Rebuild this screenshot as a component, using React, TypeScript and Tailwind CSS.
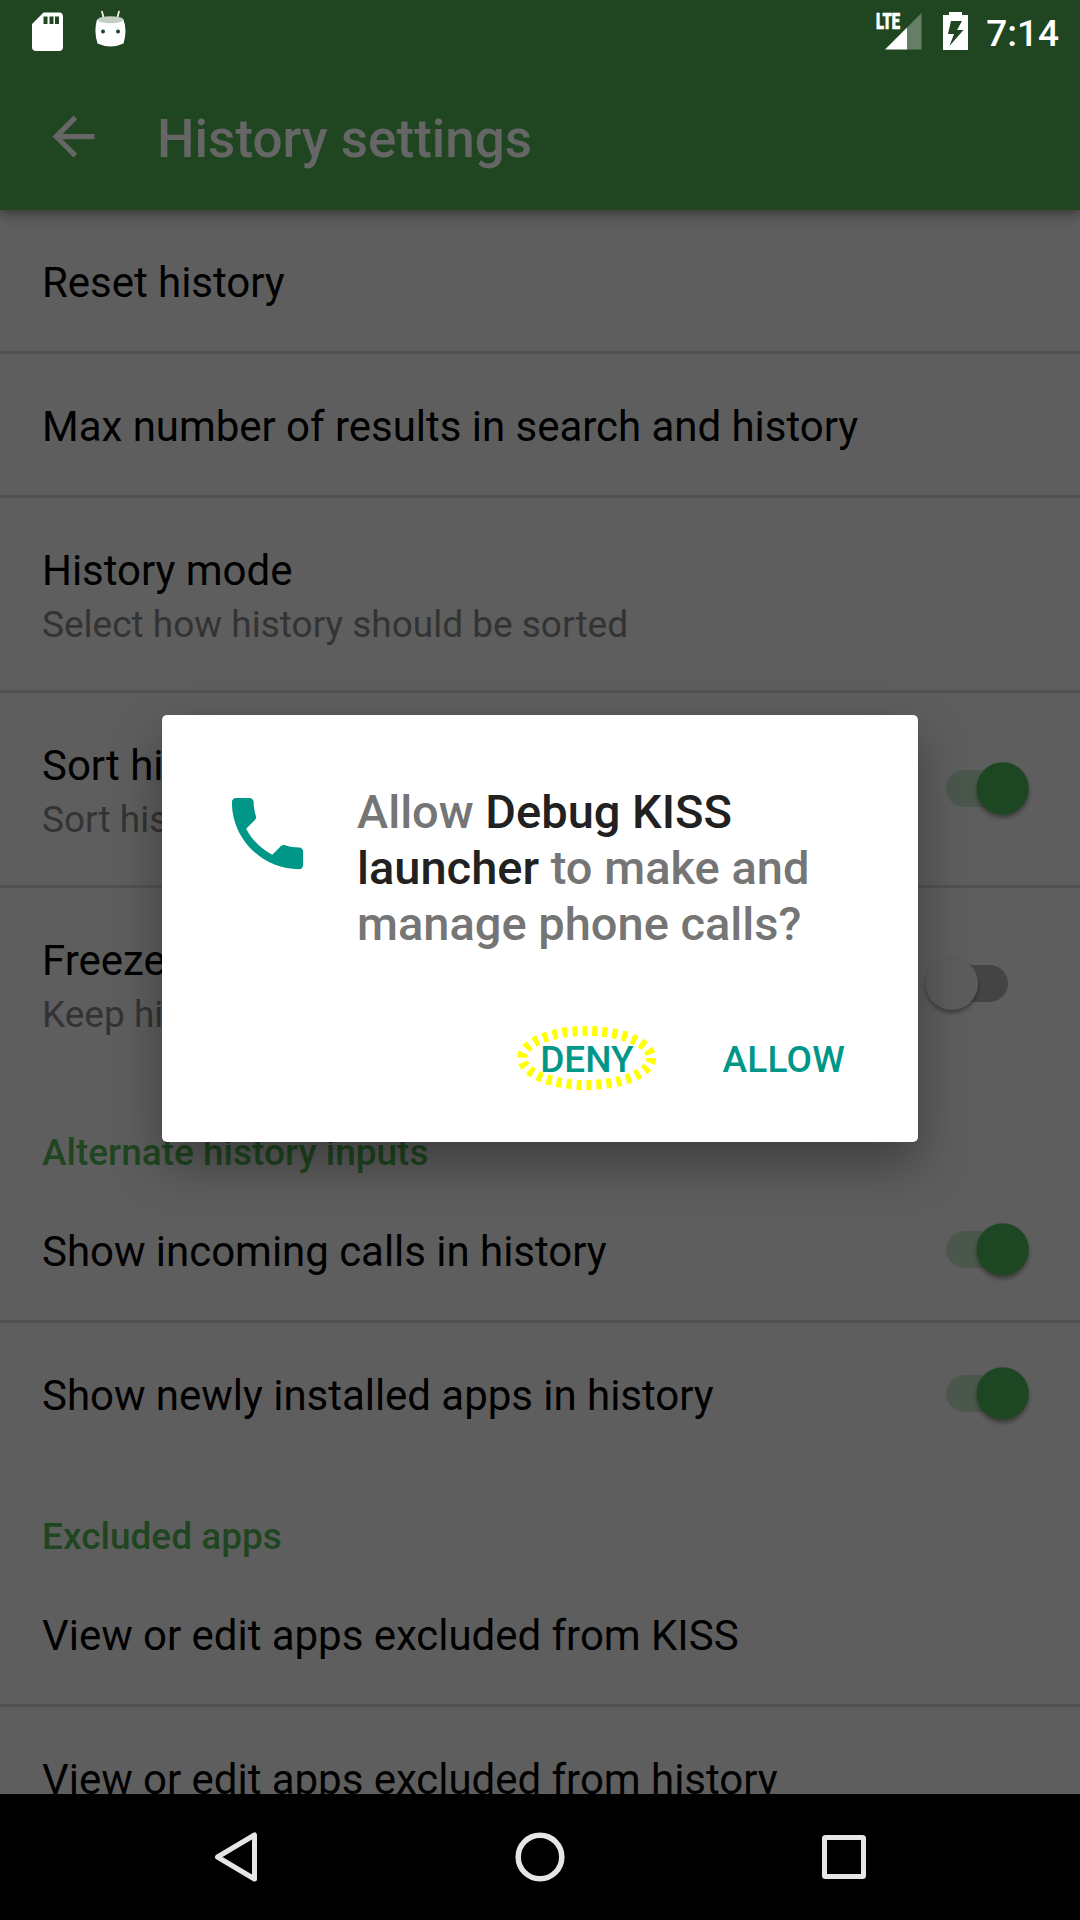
import React from "react";

function Switch({ on }: { on: boolean }) {
  return (
    <svg width="120" height="80" viewBox="0 0 120 80" className="mr-[36px] shrink-0 overflow-visible">
      <defs>
        <filter id="thumb" x="-50%" y="-50%" width="200%" height="200%">
          <feDropShadow dx="0" dy="3" stdDeviation="2.2" floodColor="#000" floodOpacity="0.38" />
        </filter>
      </defs>
      <rect x="22" y="21" width="62" height="37" rx="18.5" fill={on ? "#4b574c" : "#444444"} />
      <circle cx={on ? 78.7 : 27.8} cy="39.5" r="26.2" fill={on ? "#1f4620" : "#5c5c5c"} filter="url(#thumb)" />
    </svg>
  );
}

function Row({ title, summary, on, last }: { title: string; summary?: string; on?: boolean; last?: boolean }) {
  return (
    <div className={last ? "" : "border-b-[3px] border-[#525252]"}>
      <div className={`flex items-center justify-between pl-[42px] ${summary ? "h-[192px]" : "h-[141px]"}`}>
        <div className={`whitespace-nowrap ${summary ? "pt-[9px]" : "pt-[4px]"}`}>
          <div className="text-[42px] leading-[49px] tracking-[-0.03px] text-black">{title}</div>
          {summary && <div className="mt-[4px] text-[37px] leading-[52px] text-[#333333]">{summary}</div>}
        </div>
        {on !== undefined && <Switch on={on} />}
      </div>
    </div>
  );
}

function Category({ title }: { title: string }) {
  return (
    <div className="h-[99px] pt-[51px] pl-[42px] text-[37px] leading-[43px] font-medium text-[#1f4620]">{title}</div>
  );
}

function StatusBar() {
  return (
    <div className="flex h-[63px] justify-between">
      <svg width="140" height="63" viewBox="0 0 140 63">
        <path fill="#fff" fillRule="evenodd" d="M43.500 12.500H59a4 4 0 0 1 4 4V47a4 4 0 0 1-4 4H36a4 4 0 0 1-4-4V24zM43.500 16.500V24h4V16.500zM49.500 16.500V24h4V16.500zM55 16.500V24h4V16.500z" />
        <path stroke="#fff" strokeWidth="1.6" strokeLinecap="round" d="M102 11.500l1.800 7M119 11.500l-1.800 7" />
        <path fill="#fff" d="M97 19.500Q110.500 25 123.500 19.500Q127.500 31 123.500 43.500Q110.500 49.500 97.500 43.500Q93.500 31 97 19.500z" />
        <ellipse cx="110.500" cy="19.700" rx="13" ry="3.500" fill="#c3cfc3" />
        <circle cx="103" cy="31.500" r="2" fill="#1f4620" />
        <circle cx="118" cy="31.500" r="2" fill="#1f4620" />
      </svg>
      <div className="flex">
        <svg width="105" height="63" viewBox="870 0 105 63">
          <text x="876" y="29" fill="#fff" stroke="#fff" strokeWidth="0.7" fontFamily="Roboto" fontWeight="900" fontSize="22" textLength="24" lengthAdjust="spacingAndGlyphs">LTE</text>
          <path fill="#fff" d="M885 49.500l22-22v22z" />
          <path fill="#647f66" d="M907 27.500l14.500-14.500v36.500H907z" />
          <path fill="#fff" fillRule="evenodd" d="M949 12h13v3h6v35h-25V15h6zM951 21l-3 13h6l-4.500 12L963.500 30h-6.500l5-9z" />
        </svg>
        <span className="mt-[12px] mr-[21px] ml-[11px] text-[37px] leading-[43px] font-medium text-white">7:14</span>
      </div>
    </div>
  );
}

function AppBar() {
  return (
    <div className="flex h-[147px] items-center pl-[42px]">
      <svg width="63" height="63" viewBox="0 0 24 24" fill="#666666">
        <path d="M20 11H7.830l5.590-5.590L12 4l-8 8 8 8 1.410-1.410L7.830 13H20v-2z" />
      </svg>
      <h1 className="mt-[5px] ml-[52px] text-[53px] leading-[62px] font-medium text-[#666666]">History settings</h1>
    </div>
  );
}

function Dialog() {
  return (
    <div className="absolute top-[715px] left-[162px] flex h-[427px] w-[756px] flex-col rounded-[5px] bg-white shadow-[0_22px_50px_rgba(0,0,0,0.35)]">
      <div className="flex pt-[69px] pl-[58px]">
        <svg width="95" height="95" viewBox="0 0 24 24" fill="#009688" className="mt-[2px]">
          <path d="M6.620 10.790c1.440 2.830 3.760 5.140 6.590 6.590l2.200-2.200c.27-.27.67-.36 1.020-.24 1.120.37 2.330.57 3.570.57.55 0 1 .45 1 1V20c0 .55-.45 1-1 1-9.390 0-17-7.610-17-17 0-.55.45-1 1-1h3.500c.55 0 1 .45 1 1 0 1.250.2 2.450.57 3.570.11.35.03.74-.25 1.020l-2.200 2.200z" />
        </svg>
        <p className="ml-[42px] text-[47px] leading-[56px] font-medium whitespace-nowrap text-[#757575]">
          Allow <span className="text-[#212121]">Debug KISS<br />launcher</span> to make and<br />manage phone calls?
        </p>
      </div>
      <div className="mt-[86px] flex justify-end gap-[89px] pr-[73px] text-[37px] leading-[43px] font-medium text-[#009688]">
        <button className="relative">
          <svg width="144" height="68" viewBox="514 1024 144 68" fill="none" className="absolute top-[-14px] left-[-25px] max-w-none">
            <ellipse cx="585.700" cy="1058" rx="64.500" ry="27" stroke="#ffff00" strokeWidth="10" strokeDasharray="5 5" />
          </svg>
          <span className="relative">DENY</span>
        </button>
        <button className="tracking-[0.2px]">ALLOW</button>
      </div>
    </div>
  );
}

function NavBar() {
  return (
    <div className="flex h-[126px] items-center bg-black pl-[205px]">
      <svg width="670" height="126" viewBox="205 1794 670 126" fill="none" stroke="#e6e6e6" strokeWidth="5" strokeLinejoin="round">
        <path d="M254.500 1835v44L217.500 1857z" />
        <circle cx="540" cy="1857" r="21.800" strokeWidth="5.500" />
        <rect x="824.500" y="1837.500" width="39" height="39" rx="1" />
      </svg>
    </div>
  );
}

export default function App() {
  return (
    <div className="relative flex h-[1920px] w-[1080px] flex-col overflow-hidden bg-[#5e5e5e] font-[Roboto,sans-serif]">
      <header className="relative z-10 h-[210px] shrink-0 bg-[#1f4620] shadow-[0_4px_12px_rgba(0,0,0,0.4)]">
        <StatusBar />
        <AppBar />
      </header>
      <main className="min-h-0 flex-1 overflow-hidden">
        <Row title="Reset history" />
        <Row title="Max number of results in search and history" />
        <Row title="History mode" summary="Select how history should be sorted" />
        <Row title="Sort history by name" summary="Sort history alphabetically" on={true} />
        <Row title="Freeze history" summary="Keep history as it is" on={false} last />
        <Category title="Alternate history inputs" />
        <Row title="Show incoming calls in history" on={true} />
        <Row title="Show newly installed apps in history" on={true} last />
        <Category title="Excluded apps" />
        <Row title="View or edit apps excluded from KISS" />
        <Row title="View or edit apps excluded from history" last />
      </main>
      <NavBar />
      <Dialog />
    </div>
  );
}
